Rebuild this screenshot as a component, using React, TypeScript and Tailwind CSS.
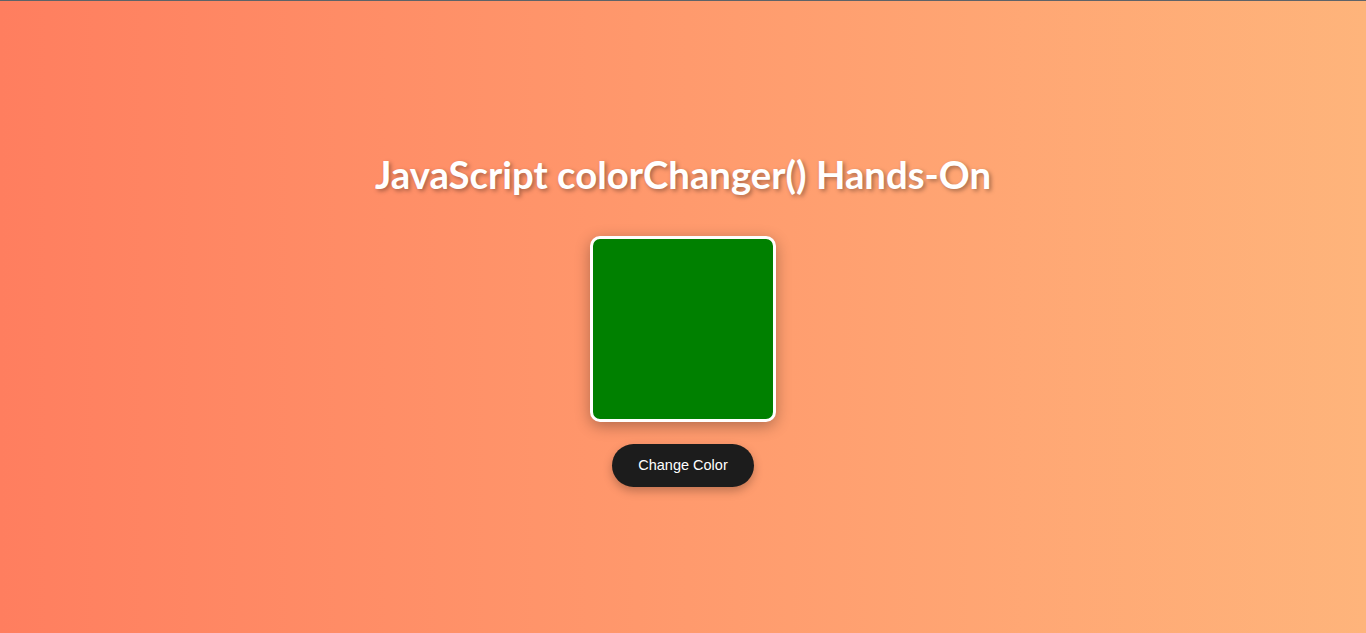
import React, { useState } from 'react';

const colors = ['green', 'blue', 'red', 'purple', 'orange', 'teal'];

const App: React.FC = () => {
  const [index, setIndex] = useState(0);

  const changeColor = () => setIndex((i) => (i + 1) % colors.length);

  return (
    <div className="min-h-screen border-t border-[#5f6368] bg-gradient-to-r from-[#ff7e5f] to-[#feb47b] flex flex-col items-center pt-[149px] font-['Lato',sans-serif]">
      <h1 className="text-[38.3px] font-bold leading-[48px] text-white [text-shadow:2px_2px_4px_rgba(0,0,0,0.35)]">
        JavaScript colorChanger() Hands-On
      </h1>

      {/* Color box */}
      <div
        className="mt-[38px] w-[186px] h-[186px] rounded-[10px] border-[3px] border-white shadow-[0_4px_15px_rgba(0,0,0,0.3)]"
        style={{ backgroundColor: colors[index] }}
      />

      <button
        onClick={changeColor}
        className="mt-[22px] w-[142px] h-[43px] rounded-full bg-[#1c1c1c] text-white text-[14.5px] font-['Liberation_Sans',sans-serif] shadow-[0_4px_10px_rgba(0,0,0,0.25)] cursor-pointer"
      >
        Change Color
      </button>
    </div>
  );
};

export default App;
